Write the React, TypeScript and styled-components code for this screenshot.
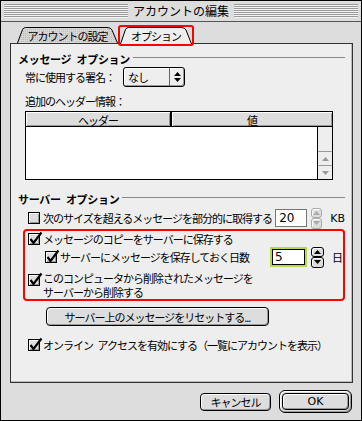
import React from 'react';
import styled, { createGlobalStyle } from 'styled-components';

const GlobalStyle = createGlobalStyle`
  html, body { margin: 0; padding: 0; background: #dddddd; }
  body {
    font-family: "Noto Sans CJK JP", "Noto Sans", sans-serif;
    font-size: 11px;
    letter-spacing: -1px;
    word-spacing: 3px;
    color: #000;
  }
  * { box-sizing: border-box; }
`;

const Window = styled.div`
  width: 362px;
  height: 421px;
  border: 1px solid #000;
  background: #dddddd;
  display: flex;
  flex-direction: column;
`;

const TitleBar = styled.div`
  height: 21px;
  flex: none;
  border-bottom: 1px solid #555;
  display: flex;
  align-items: center;
  padding: 0 3px;
  gap: 5px;
`;

const Stripes = styled.div`
  flex: 1;
  height: 14px;
  background: repeating-linear-gradient(to bottom, #999 0 1px, #f4f4f4 1px 2px);
`;

const Title = styled.div`
  font-size: 12px;
  letter-spacing: 0;
  line-height: 16px;
`;

const TabsRow = styled.div`
  height: 21px;
  flex: none;
  display: flex;
  align-items: flex-end;
  padding-left: 16px;
`;

const Tab = styled.div<{ $w: number; $active?: boolean }>`
  position: relative;
  width: ${({ $w }) => $w}px;
  height: ${({ $active }) => ($active ? 17 : 16)}px;
  display: flex;
  align-items: center;
  justify-content: center;
  padding-top: 1px;
  & > svg {
    position: absolute;
    inset: 0;
    z-index: 0;
  }
  & > span {
    position: relative;
    z-index: 1;
  }
`;

const ActiveFrame = styled.div`
  position: relative;
  z-index: 2;
  border: 2px solid #f00;
  border-radius: 3px;
  margin-bottom: -3px;
  height: 21px;
`;

const Panel = styled.div`
  margin-left: 9px;
  width: 343px;
  height: 340px;
  flex: none;
  border: 1px solid #333;
  background: #eeeeee;
  box-shadow: inset -1px -1px #bbb;
  padding: 7px 7px 0 7px;
  display: flex;
  flex-direction: column;
`;

const SectionHeader = styled.div<{ $mt?: number }>`
  display: flex;
  align-items: center;
  gap: 3px;
  height: 16px;
  margin-top: ${({ $mt }) => $mt ?? 0}px;
  font-weight: bold;
  letter-spacing: -0.3px;
  &::after {
    content: '';
    flex: 1;
    height: 1px;
    background: #888;
    margin-bottom: 3px;
  }
`;

const Row = styled.div<{ $h?: number; $indent?: number; $mt?: number; $top?: boolean }>`
  display: flex;
  align-items: ${({ $top }) => ($top ? 'flex-start' : 'center')};
  gap: 3px;
  height: ${({ $h }) => $h ?? 16}px;
  padding-left: ${({ $indent }) => $indent ?? 0}px;
  margin-top: ${({ $mt }) => $mt ?? 0}px;
  white-space: nowrap;
`;

const Grow = styled.span`
  flex: 1;
`;

const Popup = styled.div`
  width: 62px;
  height: 20px;
  margin-left: 5px;
  border: 1px solid #000;
  border-radius: 3px;
  background: #eee;
  box-shadow: inset 1px 1px #fff, inset -1px -1px #999;
  display: flex;
  align-items: center;
  padding-left: 4px;
`;

const PopupArrows = styled.div`
  width: 15px;
  height: 100%;
  border-left: 1px solid #666;
  display: flex;
  align-items: center;
  justify-content: center;
`;

const Table = styled.div`
  margin: 2px 0 0 7px;
  width: 308px;
  height: 69px;
  border: 1px solid #000;
  display: flex;
  flex-direction: column;
`;

const TableHead = styled.div`
  height: 15px;
  display: flex;
  border-bottom: 1px solid #000;
`;

const HeadCell = styled.div<{ $w?: number }>`
  width: ${({ $w }) => ($w ? `${$w}px` : 'auto')};
  flex: ${({ $w }) => ($w ? 'none' : 1)};
  background: #ddd;
  box-shadow: inset 1px 1px #fff, inset -1px -1px #999;
  text-align: center;
  line-height: 14px;
  padding-top: 1px;
  height: 14px;
  &:first-child {
    border-right: 2px solid #000;
  }
`;

const TableBody = styled.div`
  flex: 1;
  display: flex;
`;

const ListArea = styled.div`
  flex: 1;
  background: #fff;
`;

const Scrollbar = styled.div`
  width: 15px;
  border-left: 1px solid #000;
  background: #eee;
  display: flex;
  flex-direction: column;
  justify-content: flex-end;
`;

const ScrollBtn = styled.div`
  height: 14px;
  border-top: 1px solid #999;
  display: flex;
  align-items: center;
  justify-content: center;
`;

const BoxWrap = styled.span<{ $mt?: number }>`
  width: 12px;
  height: 12px;
  flex: none;
  position: relative;
  margin-top: ${({ $mt }) => $mt ?? 0}px;
  border: 1px solid #000;
  background: #ddd;
  box-shadow: inset 1px 1px #fff, inset -1px -1px #999;
  & > svg {
    position: absolute;
    left: 0;
    top: -2px;
    overflow: visible;
  }
`;

const Highlight = styled.div`
  margin: 1px 0 0 5px;
  border: 2px solid #f00;
  border-radius: 4px;
  padding: 0 0 1px 3px;
`;

const NumberField = styled.div<{ $focus?: boolean }>`
  width: ${({ $focus }) => ($focus ? 37 : 36)}px;
  height: ${({ $focus }) => ($focus ? 20 : 18)}px;
  background: #fff;
  border: ${({ $focus }) => ($focus ? '2px solid #b6d84e' : '1px solid #777')};
  box-shadow: ${({ $focus }) => ($focus ? 'inset 0 0 0 1px #000' : 'none')};
  display: flex;
  align-items: center;
  padding-left: 3px;
  font-family: "DejaVu Sans", sans-serif;
  font-size: 12px;
  letter-spacing: 0;
`;

const Spinner = styled.div`
  width: 13px;
  height: 21px;
  display: flex;
  flex-direction: column;
  margin-left: 1px;
`;

const SpinHalf = styled.div<{ $off?: boolean }>`
  flex: 1;
  border: 1px solid ${({ $off }) => ($off ? '#aaa' : '#000')};
  border-radius: 3px;
  background: #ddd;
  box-shadow: inset 1px 1px #fff;
  display: flex;
  align-items: center;
  justify-content: center;
`;

const Unit = styled.span`
  margin-left: 5px;
  font-family: "DejaVu Sans", "Noto Sans CJK JP", sans-serif;
  letter-spacing: 0;
  font-size: 11px;
`;

const TwoLines = styled.div`
  line-height: 14px;
`;

const Button = styled.div<{ $w: number; $h?: number }>`
  width: ${({ $w }) => $w}px;
  height: ${({ $h }) => $h ?? 19}px;
  border: 1px solid #000;
  border-radius: 4px;
  background: #ddd;
  box-shadow: inset 1px 1px #fff, inset -1px -1px #999;
  display: flex;
  align-items: center;
  justify-content: center;
  white-space: nowrap;
`;

const ResetButton = styled(Button)`
  margin: 6px 0 0 28px;
`;

const DefaultRing = styled.div`
  border: 1px solid #000;
  border-radius: 6px;
  padding: 2px;
  background: #ddd;
  box-shadow: inset 1px 1px #fff, inset -1px -1px #999;
`;

const OkLabel = styled.span`
  font-family: "DejaVu Sans", sans-serif;
  font-size: 11px;
  letter-spacing: 0;
`;

const Footer = styled.div`
  flex: 1;
  display: flex;
  justify-content: flex-end;
  align-items: center;
  gap: 8px;
  padding-right: 9px;
`;

const Checkbox = ({ checked, mt }: { checked?: boolean; mt?: number }) => (
  <BoxWrap $mt={mt}>
    {checked && (
      <svg width="12" height="12" viewBox="0 0 12 12">
        <path d="M1.5 7 L4.5 11 L12.5 0.5" fill="none" stroke="#000" strokeWidth="2.2" />
      </svg>
    )}
  </BoxWrap>
);

const TabShape = ({ w, h, active }: { w: number; h: number; active?: boolean }) => (
  <svg width={w} height={h} viewBox={`0 0 ${w} ${h}`}>
    <defs>
      <pattern id="dots" width="2" height="2" patternUnits="userSpaceOnUse">
        <rect width="2" height="2" fill="#d6d6d6" />
        <rect width="1" height="1" fill="#bbb" />
      </pattern>
    </defs>
    <path
      d={`M0.5 ${h} L5.5 2.5 Q6.5 0.5 8.5 0.5 L${w - 11} 0.5 Q${w - 7} 0.5 ${w - 6} 3 L${w - 0.5} ${h}`}
      fill={active ? '#eeeeee' : 'url(#dots)'}
      stroke="#000"
    />
  </svg>
);

const Tri = ({ up, color }: { up?: boolean; color: string }) => (
  <svg width="7" height="4" viewBox="0 0 7 4">
    <path d={up ? 'M0 4 L3.5 0 L7 4 Z' : 'M0 0 L3.5 4 L7 0 Z'} fill={color} />
  </svg>
);

const SpinBox = ({ off }: { off?: boolean }) => (
  <Spinner>
    <SpinHalf $off={off}>
      <Tri up color={off ? '#aaa' : '#000'} />
    </SpinHalf>
    <SpinHalf $off={off}>
      <Tri color={off ? '#aaa' : '#000'} />
    </SpinHalf>
  </Spinner>
);

export default function App() {
  return (
    <>
      <GlobalStyle />
      <Window>
        <TitleBar>
          <Stripes />
          <Title>アカウントの編集</Title>
          <Stripes />
        </TitleBar>
        <TabsRow>
          <Tab $w={101}>
            <TabShape w={101} h={16} />
            <span>アカウントの設定</span>
          </Tab>
          <ActiveFrame>
            <Tab $w={72} $active>
              <TabShape w={72} h={17} active />
              <span>オプション</span>
            </Tab>
          </ActiveFrame>
        </TabsRow>
        <Panel>
          <SectionHeader>メッセージ オプション</SectionHeader>
          <Row $h={20} $indent={7}>
            常に使用する署名：
            <Popup>
              <Grow>なし</Grow>
              <PopupArrows>
                <svg width="7" height="10" viewBox="0 0 7 10">
                  <path d="M0 4 L3.5 0 L7 4 Z M0 6 L3.5 10 L7 6 Z" fill="#000" />
                </svg>
              </PopupArrows>
            </Popup>
          </Row>
          <Row $indent={7} $mt={6}>
            追加のヘッダー情報：
          </Row>
          <Table>
            <TableHead>
              <HeadCell $w={146}>ヘッダー</HeadCell>
              <HeadCell>値</HeadCell>
            </TableHead>
            <TableBody>
              <ListArea />
              <Scrollbar>
                <ScrollBtn>
                  <Tri up color="#999" />
                </ScrollBtn>
                <ScrollBtn>
                  <Tri color="#999" />
                </ScrollBtn>
              </Scrollbar>
            </TableBody>
          </Table>
          <SectionHeader $mt={11}>サーバー オプション</SectionHeader>
          <Row $h={20} $indent={10} $mt={1}>
            <Checkbox />
            <Grow>次のサイズを超えるメッセージを部分的に取得する</Grow>
            <NumberField>20</NumberField>
            <SpinBox off />
            <Unit>KB</Unit>
          </Row>
          <Highlight>
            <Row>
              <Checkbox checked />
              メッセージのコピーをサーバーに保存する
            </Row>
            <Row $h={20} $indent={17}>
              <Checkbox checked />
              <Grow>サーバーにメッセージを保存しておく日数</Grow>
              <NumberField $focus>5</NumberField>
              <SpinBox />
              <Unit>日</Unit>
            </Row>
            <Row $h={27} $mt={4} $top>
              <Checkbox checked mt={3} />
              <TwoLines>
                このコンピュータから削除されたメッセージを
                <br />
                サーバーから削除する
              </TwoLines>
            </Row>
          </Highlight>
          <ResetButton $w={223}>サーバー上のメッセージをリセットする...</ResetButton>
          <Row $indent={10} $mt={11}>
            <Checkbox checked />
            オンライン アクセスを有効にする（一覧にアカウントを表示）
          </Row>
        </Panel>
        <Footer>
          <Button $w={71} $h={18}>キャンセル</Button>
          <DefaultRing>
            <Button $w={67} $h={17}>
              <OkLabel>OK</OkLabel>
            </Button>
          </DefaultRing>
        </Footer>
      </Window>
    </>
  );
}
